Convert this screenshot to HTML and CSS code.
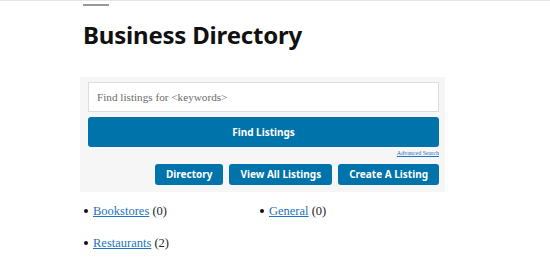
FILE: index.html
```html
<!DOCTYPE html>
<html lang="en">
<head>
    <meta charset="UTF-8">
    <title>Business Directory</title>
    <link rel="stylesheet" href="styles.css">
</head>
<body>
    <div class="page">
        <hr class="rule">
        <h1>Business Directory</h1>

        <div class="search-box">
            <form class="search">
                <input type="text" placeholder="Find listings for &lt;keywords&gt;">
                <button type="submit" class="btn btn-wide">Find Listings</button>
                <a href="#" class="advanced">Advanced Search</a>
            </form>
            <div class="actions">
                <a href="#" class="btn">Directory</a>
                <a href="#" class="btn">View All Listings</a>
                <a href="#" class="btn">Create A Listing</a>
            </div>
        </div>

        <ul class="cats">
            <li><a href="#">Bookstores</a> (0)</li>
            <li><a href="#">General</a> (0)</li>
            <li><a href="#">Restaurants</a> (2)</li>
        </ul>
    </div>
</body>
</html>
```

FILE: styles.css
```css
body {
    margin: 0;
    border-top: 1px solid #e6e6e6;
    background: #fff;
    font-family: "Liberation Serif", serif;
    color: #222;
}
.page {
    width: 365px;
    margin-left: 80px;
}
.rule {
    width: 26px;
    height: 2px;
    margin: 3px 0 0 3px;
    border: none;
    background: #999;
}
h1 {
    margin: 12px 0 0 3px;
    font-family: "Noto Sans", sans-serif;
    font-weight: 700;
    font-size: 24px;
    line-height: 34px;
    letter-spacing: -0.2px;
    color: #111;
}
.search-box {
    margin-top: 25px;
    background: #f6f6f6;
    padding: 5px 6px 7px 8px;
}
.search {
    display: flex;
    flex-direction: column;
}
.search input {
    height: 30px;
    box-sizing: border-box;
    border: 1px solid #ddd;
    padding: 0 8px;
    font-family: "Liberation Serif", serif;
    font-size: 11.2px;
    color: #555;
}
.search input::placeholder {
    color: #6b6b6b;
}
.btn {
    display: inline-block;
    background: #0073aa;
    color: #fff;
    border: none;
    border-radius: 3px;
    font-family: "Noto Sans", sans-serif;
    font-weight: 700;
    font-size: 10px;
    text-decoration: none;
    padding: 0 11px;
    line-height: 21px;
}
.btn-wide {
    margin-top: 5px;
    height: 30px;
    padding: 0;
}
.advanced {
    align-self: flex-end;
    font-size: 6px;
    line-height: 9px;
    margin-top: 2px;
    color: #1e73be;
}
.actions {
    display: flex;
    justify-content: flex-end;
    gap: 6px;
    margin-top: 6px;
}
.cats {
    display: grid;
    grid-template-columns: 176px 176px;
    row-gap: 13px;
    margin: 10px 0 0;
    padding-left: 13px;
    list-style: none;
    font-size: 12.5px;
    line-height: 19px;
}
.cats li::before {
    content: "";
    display: inline-block;
    width: 4px;
    height: 4px;
    margin: 0 5px 2px -9px;
    border-radius: 50%;
    background: #111;
}
.cats a {
    color: #1e73be;
}
```
